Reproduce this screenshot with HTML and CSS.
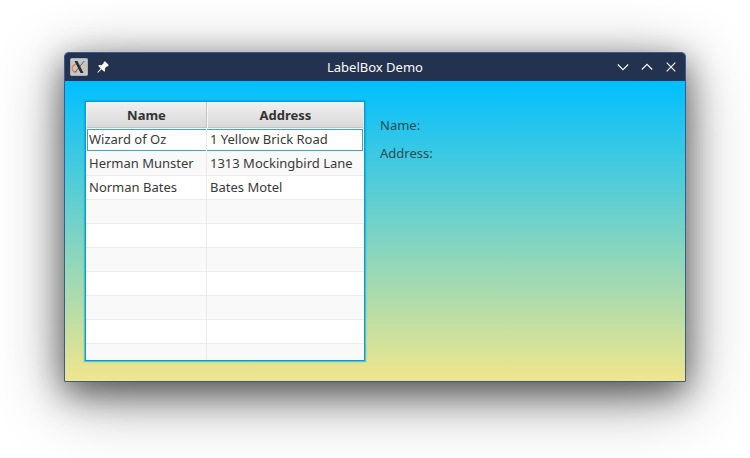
FILE: index.html
```html
<!DOCTYPE html>
<html lang="en">
<head>
<meta charset="utf-8">
<title>LabelBox Demo</title>
<link rel="stylesheet" href="styles.css">
</head>
<body>
<main class="window">
  <header class="titlebar">
    <div class="side">
      <svg class="app-icon" width="18" height="18" viewBox="0 0 18 18">
        <rect x=".5" y=".5" width="17" height="17" rx="1" fill="#c3c8ca" stroke="#aab1b5"/>
        <path d="M6.500 6C3.500 6.500 1.500 9 2.300 11.500c.6 2 3 2.700 5.200 2.300" fill="none" stroke="#ef7c50" stroke-width="1.300"/>
        <path d="M11 14c3-.5 5-2.500 4.700-5.200-.2-1.500-1.200-2.500-2.700-2.800" fill="none" stroke="#e0b98a" stroke-width="1.200"/>
        <path d="M14.300 3L4.800 14.500" stroke="#5b5f60" stroke-width="1"/>
        <path d="M4.500 3h3l6 12h-3z" fill="#2c2f30"/>
      </svg>
      <svg class="pin" width="12" height="12" viewBox="0 0 12 12">
        <path d="M8 .3L11.700 4 11 5.200 9.300 5.700 7.800 7.800 8.200 9.800 7.300 10.800 4.500 8.300 1 11.800.3 11.200 3.700 7.600 1.200 4.800 2.300 3.900 4.300 4.200 6.300 2.700 6.800 1z" fill="#fcfcfc"/>
      </svg>
    </div>
    <h1 class="title">LabelBox Demo</h1>
    <div class="side controls">
      <svg width="12" height="12" viewBox="0 0 12 12"><path d="M.8 3.500L6 8.700l5.200-5.200"/></svg>
      <svg width="12" height="12" viewBox="0 0 12 12"><path d="M.8 8.500L6 3.300l5.200 5.200"/></svg>
      <svg width="12" height="12" viewBox="0 0 12 12"><path d="M1.700 1.700l8.600 8.600m0-8.600l-8.600 8.600"/></svg>
    </div>
  </header>
  <section class="content">
    <div class="table">
      <div class="row head"><b>Name</b><b>Address</b></div>
      <div class="row focused"><span>Wizard of Oz</span><span>1 Yellow Brick Road</span></div>
      <div class="row"><span>Herman Munster</span><span>1313 Mockingbird Lane</span></div>
      <div class="row"><span>Norman Bates</span><span>Bates Motel</span></div>
      <div class="row"><span></span><span></span></div>
      <div class="row"><span></span><span></span></div>
      <div class="row"><span></span><span></span></div>
      <div class="row"><span></span><span></span></div>
      <div class="row"><span></span><span></span></div>
      <div class="row"><span></span><span></span></div>
      <div class="row"><span></span><span></span></div>
    </div>
    <div class="labels">
      <div>Name:</div>
      <div>Address:</div>
    </div>
  </section>
</main>
</body>
</html>
```
FILE: styles.css
```css
* { box-sizing: border-box; }
body {
  margin: 0;
  height: 458px;
  padding: 52px 64px;
  overflow: hidden;
  background: #fff;
  font: 13px/24px "Noto Sans", sans-serif;
  color: #393939;
}
.window {
  width: 622px;
  height: 330px;
  border: 1px solid #3b5b8c;
  border-radius: 4px 4px 0 0;
  box-shadow: 0 15px 64px rgba(0, 0, 0, .45), 0 10px 32px rgba(0, 0, 0, .48);
}
.titlebar {
  height: 28px;
  display: flex;
  align-items: center;
  justify-content: space-between;
  background: #22324f;
  border-radius: 3px 3px 0 0;
}
.side { width: 100px; display: flex; align-items: center; }
.app-icon { margin-left: 5px; }
.pin { margin-left: 9px; }
.title { margin: 0; font-size: 13px; font-weight: 400; color: #fcfcfc; }
.controls { justify-content: flex-end; gap: 12px; padding-right: 8px; }
.controls path { fill: none; stroke: #fcfcfc; stroke-width: 1.1; }
.content {
  height: 300px;
  padding: 20px;
  display: flex;
  gap: 15px;
  background: linear-gradient(#00bfff, #f0e68c);
}
.table {
  width: 280px;
  height: 260px;
  border: 1px solid #039ed3;
  background: #fff;
  box-shadow: 0 0 1px 1px rgba(3, 158, 211, .5);
  overflow: hidden;
}
.row {
  display: grid;
  grid-template-columns: 121px 157px;
  height: 24px;
  border-bottom: 1px solid #ececec;
}
.row span {
  height: 23px;
  padding-left: 3px;
  border-right: 1px solid #ececec;
  line-height: 22px;
  white-space: nowrap;
}
.row span:last-child { border-right-color: transparent; }
.row:nth-child(odd) { background: #f9f9f9; }
.row.head {
  height: 26px;
  line-height: 27px;
  background: linear-gradient(#f0f0f0, #d9d9d9);
  border-bottom-color: #c3c3c3;
  text-align: center;
}
.head b { padding-left: 1px; border-right: 1px solid #c3c3c3; box-shadow: inset 1px 1px #f6f6f6; color: #333; }
.head b:last-child { border-right-color: #e8e8e8; }
.row.focused { border-bottom-color: #fff; position: relative; }
.focused::before {
  content: "";
  position: absolute;
  inset: 1px 1px 0;
  border: 1px solid #32a9d2;
}
.focused span { position: relative; }
.labels { padding-top: 12px; display: grid; gap: 4px; align-content: start; color: #2b4a53; }
```
